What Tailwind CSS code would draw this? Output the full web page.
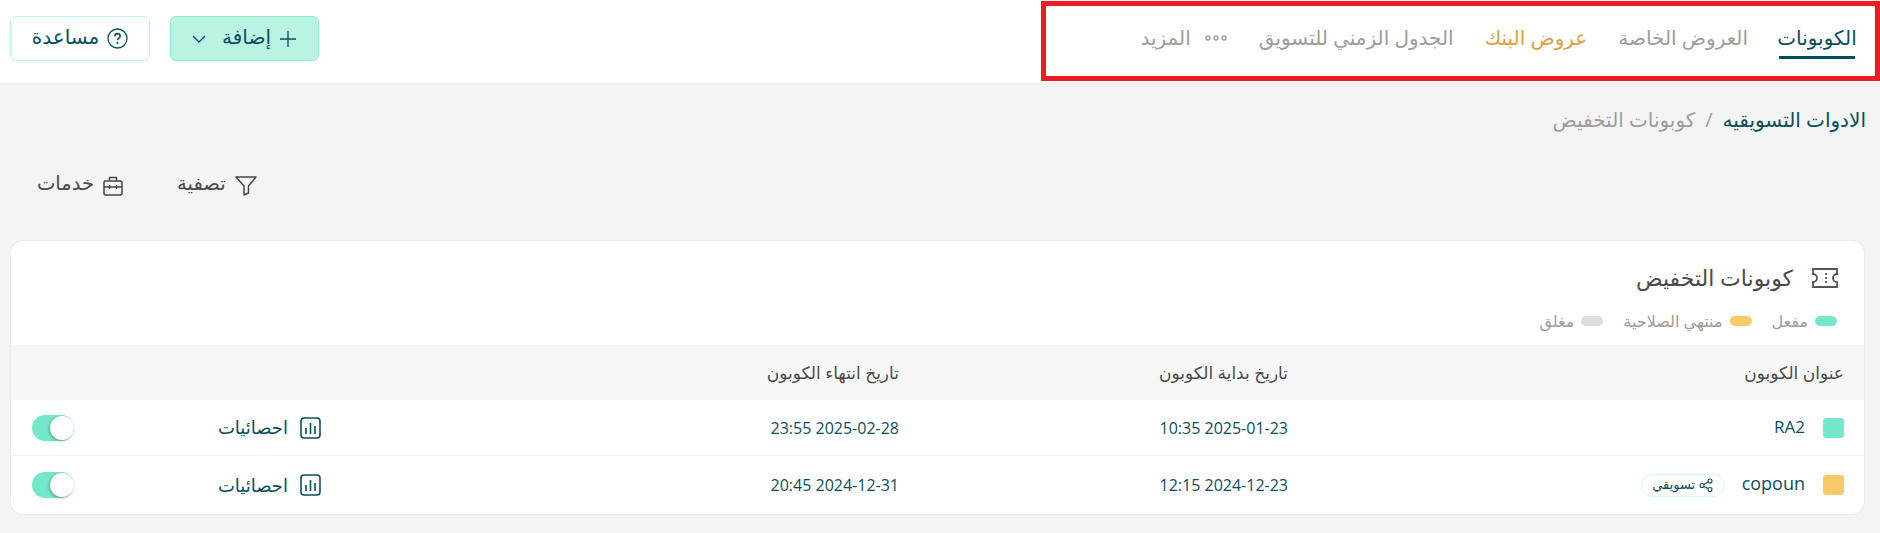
<!DOCTYPE html>
<html lang="ar" dir="rtl">
<head>
    <meta charset="UTF-8">
    <title>كوبونات التخفيض</title>
    <script src="https://cdn.jsdelivr.net/npm/@tailwindcss/browser@4"></script>
</head>
<body class="relative h-[533px] overflow-hidden bg-[#f4f4f4] font-['Open_Sans','DejaVu_Sans',sans-serif] text-[#0b4f5c]">
    <!-- Top bar -->
    <header class="flex h-[83px] items-center justify-between bg-white pr-[25px] pb-[6px] pl-[10px] shadow-[0_1px_2px_rgba(0,0,0,0.04)]">
        <nav class="flex h-full items-center gap-[31px] text-[20px]">
            <a class="relative flex h-full w-[76px] items-center justify-center whitespace-nowrap">
                <span class="-translate-y-px">الكوبونات</span>
                <span class="absolute top-[56px] right-0 left-0 h-[3px] bg-[#00505c]"></span>
            </a>
            <a class="-translate-y-px whitespace-nowrap text-[#a09c98]">العروض الخاصة</a>
            <a class="-translate-y-px whitespace-nowrap text-[#e0a040]">عروض البنك</a>
            <a class="-translate-y-px whitespace-nowrap text-[#a09c98]">الجدول الزمني للتسويق</a>
            <a class="flex -translate-y-px items-center gap-[13px] whitespace-nowrap text-[#a09c98]">
                <svg width="24" height="6" viewBox="0 0 24 6" fill="none" stroke="#a09c98" stroke-width="1.4"><circle cx="4" cy="3" r="2"/><circle cx="12" cy="3" r="2"/><circle cx="20" cy="3" r="2"/></svg>
                المزيد
            </a>
        </nav>
        <div class="flex items-center gap-5">
            <button class="flex h-[45px] w-[149px] items-center justify-center gap-2 rounded-md border border-[#8fe8d2] bg-[#b9f3e4] text-[20px]">
                <svg width="18" height="18" viewBox="0 0 18 18" stroke="#0b4f5c" stroke-width="1.3"><path d="M9 1v16M1 9h16"/></svg>
                <span class="-translate-y-[2px]">إضافة</span>
                <svg class="mr-2" width="14" height="8" viewBox="0 0 14 8" fill="none" stroke="#0b4f5c" stroke-width="1.3"><path d="M1 1l6 6 6-6"/></svg>
            </button>
            <button class="flex h-[45px] w-[140px] items-center justify-center gap-2 rounded-md border border-[#b9f3e4] bg-white text-[20px]">
                <svg width="21" height="21" viewBox="0 0 21 21" fill="none" stroke="#0b4f5c" stroke-width="1.3"><circle cx="10.5" cy="10.5" r="9.5"/><path d="M7.8 8.2c0-3.4 5.4-3.4 5.4 0 0 2-2.7 2-2.7 4" stroke-width="1.6"/><path d="M10.5 14v1.8" stroke-width="1.8"/></svg>
                <span class="-translate-y-[2px]">مساعدة</span>
            </button>
        </div>
    </header>

    <!-- Breadcrumb -->
    <div class="flex h-[74px] items-center gap-[10px] pr-[14px] text-[20px]">
        <span>الادوات التسويقيه</span>
        <span class="text-[#a09c98]">/</span>
        <span class="text-[#a09c98]">كوبونات التخفيض</span>
    </div>

    <!-- Filter and services -->
    <div class="flex h-[58px] items-center justify-end gap-[54px] pl-[37px] text-[19.5px] text-[#4a4a4a]">
        <span class="flex items-center gap-[9px]">
            <svg width="22" height="20" viewBox="0 0 22 20" fill="none" stroke="#444" stroke-width="1.5" stroke-linejoin="round"><path d="M1 1h20l-7.500 9v7l-4.500 2v-9z"/></svg>
            <span class="-translate-y-[3px]">تصفية</span>
        </span>
        <span class="flex items-center gap-[9px]">
            <svg width="20" height="20" viewBox="0 0 20 20" fill="none" stroke="#444" stroke-width="1.5" stroke-linejoin="round"><rect x="1" y="5" width="18" height="14" rx="1.5"/><path d="M6.500 5V1.500h7V5M1 11h18M6.500 9v4M13.500 9v4"/></svg>
            <span class="-translate-y-[3px]">خدمات</span>
        </span>
    </div>

    <!-- Coupons card -->
    <section class="mx-4 mt-[26px] ml-[11px] h-[273px] overflow-hidden rounded-xl bg-white shadow-[0_0_2px_rgba(0,0,0,0.12)]">
        <div class="flex h-[70px] items-center pt-[4px] pr-[26px]">
            <svg width="26" height="20" viewBox="0 0 26 20" fill="none" stroke="#555" stroke-width="1.8"><path d="M1 1h24v5a4 4 0 0 0 0 8v5H1v-5a4 4 0 0 0 0-8z"/><path d="M14 5v2M14 9v2M14 13v2"/></svg>
            <h2 class="mr-[19px] -translate-y-px text-[22px] text-[#4a4a4a]">كوبونات التخفيض</h2>
        </div>
        <div class="flex h-[34px] items-start gap-[20px] pr-[27px] text-[16px] leading-[20px] text-[#a09c98]">
            <span class="flex items-center gap-[7px]"><i class="h-[10px] w-[22px] rounded-full bg-[#75e8ca]"></i>مفعل</span>
            <span class="flex items-center gap-[7px]"><i class="h-[10px] w-[22px] rounded-full bg-[#f6ca67]"></i>منتهي الصلاحية</span>
            <span class="flex items-center gap-[7px]"><i class="h-[10px] w-[22px] rounded-full bg-[#dddddd]"></i>مغلق</span>
        </div>

        <div class="grid h-[55px] grid-cols-[556px_389px_578px_1fr] items-center bg-[#f7f7f7] pr-[20px] text-[17px] text-[#4a4a4a]">
            <span>عنوان الكوبون</span>
            <span>تاريخ بداية الكوبون</span>
            <span>تاريخ انتهاء الكوبون</span>
            <span></span>
        </div>

        <div class="grid h-[56px] grid-cols-[556px_389px_578px_1fr] items-center border-b border-[#f2f2f2] pr-[20px] text-[16px]">
            <div class="flex items-center gap-[18px]">
                <i class="h-[20px] w-[21px] rounded-[3px] bg-[#75e8ca]"></i>
                <span class="-translate-y-px text-[17px]">RA2</span>
            </div>
            <span>2025-01-23 10:35</span>
            <span>2025-02-28 23:55</span>
            <div class="flex items-center justify-between pl-[21px]">
                <span class="flex items-center gap-[12px] text-[18px]">
                    <svg width="21" height="22" viewBox="0 0 21 22" fill="none" stroke="#0b4f5c" stroke-width="1.6"><rect x="1" y="1" width="19" height="20" rx="3"/><path d="M6 11v6M10.500 6v11M15 9v8"/></svg>
                    احصائيات
                </span>
                <span class="flex h-[26px] w-[42px] items-center justify-start rounded-full bg-[#75e8ca]"><i class="h-[24px] w-[24px] rounded-full bg-white shadow-[-1px_1px_3px_rgba(0,0,0,0.3)]"></i></span>
            </div>
        </div>

        <div class="grid h-[58px] grid-cols-[556px_389px_578px_1fr] items-center pr-[20px] text-[16px]">
            <div class="flex items-center">
                <i class="h-[20px] w-[21px] rounded-[3px] bg-[#f6ca67]"></i>
                <span class="mr-[18px] -translate-y-[2px] text-[18px]">copoun</span>
                <span class="mr-[17px] flex h-[23px] w-[84px] items-center justify-center gap-[4px] rounded-full border border-[#d8f6ee] text-[13px]">
                    <svg width="14" height="14" viewBox="0 0 14 14" fill="none" stroke="#0b4f5c" stroke-width="1.1"><circle cx="11" cy="3" r="2"/><circle cx="3" cy="7.500" r="2"/><circle cx="11" cy="11.500" r="2"/><path d="M5 6.500l4.200-2.500M5 8.500l4.200 2"/></svg>
                    تسويقي
                </span>
            </div>
            <span>2024-12-23 12:15</span>
            <span>2024-12-31 20:45</span>
            <div class="flex items-center justify-between pl-[21px]">
                <span class="flex items-center gap-[12px] text-[18px]">
                    <svg width="21" height="22" viewBox="0 0 21 22" fill="none" stroke="#0b4f5c" stroke-width="1.6"><rect x="1" y="1" width="19" height="20" rx="3"/><path d="M6 11v6M10.500 6v11M15 9v8"/></svg>
                    احصائيات
                </span>
                <span class="flex h-[26px] w-[42px] items-center justify-start rounded-full bg-[#75e8ca]"><i class="h-[24px] w-[24px] rounded-full bg-white shadow-[-1px_1px_3px_rgba(0,0,0,0.3)]"></i></span>
            </div>
        </div>
    </section>

    <!-- Red annotation box over the tabs -->
    <div class="absolute top-[1px] right-0 h-[80px] w-[839px] border-[5px] border-[#ed1c24]"></div>
</body>
</html>
